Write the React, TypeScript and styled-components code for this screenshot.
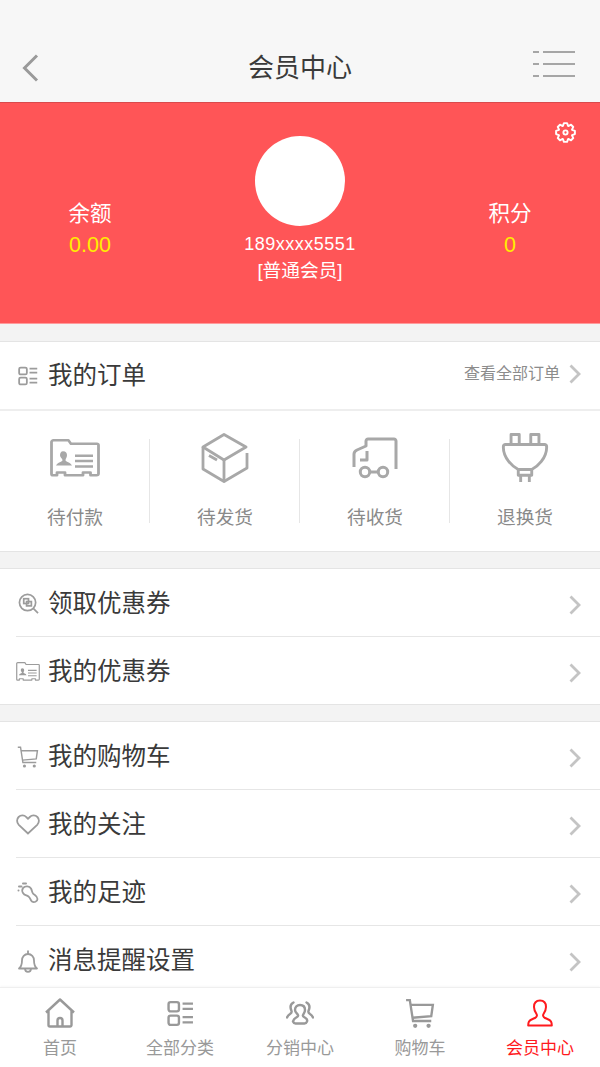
import React from "react";
import styled, { createGlobalStyle } from "styled-components";

const Global = createGlobalStyle`
  html, body { margin: 0; padding: 0; height: 100%; }
  body { font-family: "Liberation Sans", "Noto Sans CJK SC", sans-serif; background: #f3f3f3; }
  #root { height: 100%; }
`;

const Page = styled.div`
  width: 600px; height: 1067px; display: flex; flex-direction: column; overflow: hidden; background: #f3f3f3;
`;
const Scroll = styled.main`
  flex: 1; min-height: 0; overflow: hidden;
`;
const Header = styled.header`
  height: 102px; box-sizing: border-box; padding: 0 25px 0 22px; background: #f7f7f7;
  display: grid; grid-template-columns: 253px auto 1fr; align-items: start;
`;
const BackIcon = styled.svg`
  margin-top: 54px; justify-self: start; grid-column: 1;
`;
const MenuIcon = styled.svg`
  margin-top: 50px; justify-self: end;
`;
const HeaderTitle = styled.h1`
  margin: 50px 0 0 -27px; font-size: 26px; line-height: 36px; font-weight: 400; color: #3a3a3a;
`;
const Hero = styled.section`
  height: 222px; box-sizing: border-box; background: #ff5557; border-top: 1px solid #d94a4c;
  border-bottom: 1px solid #ff9a9b; position: relative;
  display: grid; grid-template-columns: 180px 240px 180px; padding-top: 33px;
`;
const Stat = styled.div`
  display: flex; flex-direction: column; align-items: center; padding-top: 63px;
`;
const StatLabel = styled.div`
  font-size: 21.500px; line-height: 30px; color: #fff;
`;
const StatValue = styled.div`
  font-size: 21.500px; line-height: 32px; color: #ffee00;
`;
const Profile = styled.div`
  display: flex; flex-direction: column; align-items: center;
`;
const Avatar = styled.div`
  width: 90px; height: 90px; border-radius: 50%; background: #fff; margin-bottom: 3px;
`;
const Phone = styled.div`
  font-size: 18px; line-height: 30px; color: #fff; letter-spacing: 0.5px;
`;
const Level = styled.div`
  font-size: 18.700px; line-height: 24px; color: #fff;
`;
const Gear = styled.div`
  position: absolute; top: 19px; right: 24px; width: 21px; height: 21px; color: #fff;
`;
const Panel = styled.section<{ $gap: number }>`
  margin-top: ${(p) => p.$gap}px; background: #fff; border-top: 1px solid #e4e4e4; border-bottom: 1px solid #e4e4e4;
`;
const OrderHead = styled.div`
  height: 67px; display: flex; align-items: center; padding: 0 19px 0 16px; border-bottom: 2px solid #eeeeee;
`;
const RowIcon = styled.span`
  width: 24px; height: 24px; margin-right: 8px; display: flex; align-items: center; justify-content: center;
  color: #9c9c9c; flex: none;
`;
const RowTitle = styled.span`
  font-size: 24.500px; line-height: 34px; color: #3a3a3a; flex: 1;
`;
const AllOrders = styled.span`
  font-size: 16px; line-height: 24px; color: #8c8c8c; margin-right: 9px; margin-top: -3px;
`;
const Chevron = styled.svg<{ $lift: number }>`
  width: 12px; height: 20px; flex: none; color: #c4c4c4; margin-top: ${(p) => p.$lift}px;
`;
const Statuses = styled.div`
  display: grid; grid-template-columns: repeat(4, 150px); height: 140px; box-sizing: border-box;
`;
const StatusCell = styled.div`
  display: flex; flex-direction: column; align-items: center; padding-top: 18px; box-sizing: border-box; position: relative;
  color: #a8a8a8;
  &:not(:last-child)::after {
    content: ""; position: absolute; right: 0; top: 28px; height: 84px; width: 1px; background: #e6e6e6;
  }
`;
const StatusIcon = styled.div`
  height: 58px; display: flex; align-items: center; justify-content: center;
`;
const StatusText = styled.div`
  margin-top: 18px; font-size: 18.700px; line-height: 26px; color: #8a8a8a;
`;
const ListRow = styled.div`
  height: 65px; padding-top: 2px; margin-left: 16px; padding-right: 19px; display: flex; align-items: center;
  & + & { border-top: 1px solid #e6e6e6; }
`;
const TabBar = styled.nav`
  height: 80px; flex: none; background: #fff; border-top: 1px solid #efefef; box-sizing: border-box;
  display: grid; grid-template-columns: repeat(5, 120px); box-shadow: 0 -1px 2px rgba(0,0,0,0.03);
`;
const Tab = styled.div<{ $active?: boolean }>`
  display: flex; flex-direction: column; align-items: center; padding-top: 9px;
  color: ${(p) => (p.$active ? "#ff1a1e" : "#999")};
`;
const TabIcon = styled.div`
  height: 32px; display: flex; align-items: center; justify-content: center;
`;
const TabText = styled.div`
  margin-top: 8px; font-size: 17px; line-height: 24px;
`;

const Right = ({ lift = 2 }: { lift?: number }) => (
  <Chevron $lift={lift} viewBox="0 0 12 20" fill="none" stroke="currentColor" strokeWidth="2.800"><path d="M1.500 1.500 10 10l-8.500 8.500" /></Chevron>
);

const ListIcon = ({ size = 22, sw = 1.500 }: { size?: number; sw?: number }) => (
  <svg width={size} height={size} viewBox="0 0 26 26" fill="none" stroke="currentColor" strokeWidth={(sw * 26) / size}>
    <rect x="1.500" y="2" width="10" height="9" rx="2" /><rect x="1.500" y="15" width="10" height="9" rx="2" />
    <path d="M15 3.500h10M15 8.500h10M15 16.500h10M15 21.500h10" />
  </svg>
);
const CardIcon = ({ w, h, sw }: { w: number; h: number; sw: number }) => (
  <svg width={w} height={h} viewBox="0 0 50 43" fill="none" stroke="currentColor" strokeWidth={sw} preserveAspectRatio="none">
    <path d="M1.500 3.500a2 2 0 0 1 2-2h15l2.500 4h26a1.500 1.500 0 0 1 1.500 1.500V39a2 2 0 0 1-2 2h-6v-3H33v3H15v-3H7v3H3a1.500 1.500 0 0 1-1.500-1.500z" strokeLinejoin="round" />
    <path d="M25 19h18M25 25h18M25 31h18" />
    <path d="M13 14c3 0 4 2 4 4.500 0 2.500-1.500 4-1.500 5.500 0 2 5 2 6.500 6H6c1.500-4 6.500-4 6.500-6C12.500 22.500 10 21 10 18.500 10 16 11 14 13 14z" fill="currentColor" stroke="none" />
  </svg>
);
const BoxIcon = () => (
  <svg width="48" height="50" viewBox="0 0 48 50" fill="none" stroke="currentColor" strokeWidth="2.800" strokeLinejoin="round">
    <path d="M23 1.500 45 14 23 27 2 14z" /><path d="M2 14v22l21 12.500V27" /><path d="M23 48.500 46 35V20" /><path d="M8 22.500l8 4.500" />
  </svg>
);
const TruckIcon = () => (
  <svg width="46" height="42" viewBox="0 0 46 42" fill="none" stroke="currentColor" strokeWidth="3" strokeLinejoin="round">
    <path d="M2 30V17c0-2 1-3 3-4l9-4V4c0-1 1-2 2-2h26c1 0 2 1 2 2v28" />
    <path d="M15 14v9H8" /><circle cx="13" cy="35" r="4.700" /><circle cx="31" cy="35" r="4.700" /><path d="M17.500 35h9" />
  </svg>
);
const PlugIcon = () => (
  <svg width="48" height="50" viewBox="0 0 48 52" fill="none" stroke="currentColor" strokeWidth="3" strokeLinejoin="round">
    <path d="M9.500 12V1.500H18V12M30 12V1.500h8.500V12" />
    <path d="M1.500 14c0-1 1-2 2-2h41c1 0 2 1 2 2v1C46.500 26 37 35 31 38H17C11 35 1.500 26 1.500 15z" />
    <path d="M17 38v6h14v-6M19.500 44v7M28.500 44v7" />
  </svg>
);
const SearchTagIcon = () => (
  <svg width="21" height="21" viewBox="0 0 22 22" fill="none" stroke="currentColor" strokeWidth="1.800">
    <circle cx="10" cy="10" r="8.500" /><path d="M16 16l5 5" /><rect x="6" y="6" width="5" height="5" /><rect x="9" y="9" width="5" height="4.500" />
  </svg>
);
const CartIcon = ({ w, h, sw }: { w: number; h: number; sw: number }) => (
  <svg width={w} height={h} viewBox="0 0 28 28" fill="none" stroke="currentColor" strokeWidth={sw}>
    <path d="M1 1.500h3.500L7.500 21h17" /><path d="M5 6h21l-1.500 10.500L7 18" />
    <circle cx="9.500" cy="25.500" r="2" fill="currentColor" stroke="none" /><circle cx="22" cy="25.500" r="2" fill="currentColor" stroke="none" />
  </svg>
);
const HeartIcon = () => (
  <svg width="24" height="21" viewBox="0 0 24 21" fill="none" stroke="currentColor" strokeWidth="1.800">
    <path d="M12 19.500 2.800 10.800C.5 8.500.6 5 2.600 3c2.200-2.200 5.700-2 7.600 0L12 4.800 13.800 3c2-2 5.400-2.200 7.600 0 2 2 2.100 5.500-.2 7.800z" />
  </svg>
);
const FootIcon = () => (
  <svg width="22" height="22" viewBox="0 0 22 22" fill="none" stroke="currentColor" strokeWidth="1.800" strokeLinecap="round">
    <path d="M6 6c2.500-2.500 6.500-2 8 .5 1 1.800.8 3.500 2 5 1.200 1.500 4.500 2.500 4.500 5.500 0 2.500-3.500 4-5.500 2.500-2-1.600-1.500-3.500-3.500-5-2-1.400-4-1-5.500-3.500C5 9.500 5.300 7.200 6 6z" />
    <path d="M1.500 8.500v.01M2 4.500h2.500M6 1.500h3" strokeWidth="2" />
  </svg>
);
const BellIcon = () => (
  <svg width="22" height="24" viewBox="0 0 22 24" fill="none" stroke="currentColor" strokeWidth="1.800" strokeLinejoin="round">
    <path d="M2 19.500c2.500-2 3-4 3-8 0-3.500 2.500-6.500 6-6.500s6 3 6 6.500c0 4 .5 6 3 8z" /><path d="M11 5V1.500M8 19.500c0 4.500 6 4.500 6 0" />
  </svg>
);
const HomeIcon = () => (
  <svg width="30" height="30" viewBox="0 0 30 30" fill="none" stroke="currentColor" strokeWidth="2.400" strokeLinejoin="round">
    <path d="M1 14.500 15 1.500l14 13M3.500 12.500V27a1.500 1.500 0 0 0 1.500 1.500h20a1.500 1.500 0 0 0 1.500-1.500V12.500" /><path d="M12.500 28.500v-6a2.500 2.500 0 0 1 5 0v6" />
  </svg>
);
const PeopleIcon = () => (
  <svg width="28" height="24" viewBox="0 0 28 24" fill="none" stroke="currentColor" strokeWidth="2.400" strokeLinecap="round">
    <path d="M14 4c3 0 5 2 5 5 0 2.500-1.500 3.800-2 5-.5 1 .5 2 2.500 3 1.500.8 2 2 1.500 3.500-.4 1-1.300 2-2.500 2h-9c-1.200 0-2.100-1-2.500-2C7.500 19 8 17.800 9.500 17c2-1 3-2 2.500-3-.5-1.200-3-2.500-3-5 0-3 2-5 5-5z" />
    <path d="M7.500 1.500C4.500 3 4 6.500 5.500 10c.5 1.200 0 2-1.500 3-1.300.8-2.300 1.800-3 3.500M20.500 1.500c3 1.500 3.500 5 2 8.500-.5 1.200 0 2 1.500 3 1.300.8 2.300 1.800 3 3.500" />
  </svg>
);
const UserIcon = () => (
  <svg width="26" height="28" viewBox="0 0 26 28" fill="none" stroke="currentColor" strokeWidth="2" strokeLinejoin="round">
    <path d="M13 1.500c4 0 6 2.500 6 6.500 0 3-1.500 5.500-2.500 7-.8 1.200-.5 3 1.500 4 2 1 5 1.500 6 3.500.5 1 .8 2.500.8 4H1.200c0-1.500.3-3 .8-4 1-2 4-2.500 6-3.500 2-1 2.300-2.800 1.500-4C8.500 13.500 7 11 7 8c0-4 2-6.500 6-6.500z" />
  </svg>
);

const gearPath = (() => {
  const teeth = 8;
  const cx = 11;
  const cy = 11;
  const pts: string[] = [];
  for (let i = 0; i < teeth; i++) {
    const a = (i * 2 * Math.PI) / teeth - Math.PI / 2;
    const d = Math.PI / teeth;
    [[7.4, -d * 0.95], [10, -d * 0.42], [10, d * 0.42], [7.4, d * 0.95]].forEach(([r, o]) => {
      pts.push(`${(cx + r * Math.cos(a + o)).toFixed(2)} ${(cy + r * Math.sin(a + o)).toFixed(2)}`);
    });
  }
  return `M${pts.join("L")}Z`;
})();

const rows1 = [
  { t: "领取优惠券", i: <SearchTagIcon /> },
  { t: "我的优惠券", i: <CardIcon w={24} h={19} sw={2.500} /> },
];
const rows2 = [
  { t: "我的购物车", i: <CartIcon w={22} h={22} sw={1.800} /> },
  { t: "我的关注", i: <HeartIcon /> },
  { t: "我的足迹", i: <FootIcon /> },
  { t: "消息提醒设置", i: <BellIcon /> },
];
const statuses = [
  { t: "待付款", i: <CardIcon w={50} h={38} sw={2.800} /> },
  { t: "待发货", i: <BoxIcon /> },
  { t: "待收货", i: <TruckIcon /> },
  { t: "退换货", i: <PlugIcon /> },
];
const tabs = [
  { t: "首页", i: <HomeIcon /> },
  { t: "全部分类", i: <ListIcon size={27} sw={2.400} /> },
  { t: "分销中心", i: <PeopleIcon /> },
  { t: "购物车", i: <CartIcon w={30} h={31} sw={2.200} /> },
  { t: "会员中心", i: <UserIcon />, active: true },
];

export default function App() {
  return (
    <Page>
      <Global />
      <Scroll>
        <Header>
          <BackIcon width="17" height="28" viewBox="0 0 17 28" fill="none" stroke="#9a9a9a" strokeWidth="3">
            <path d="M15 1.500 2.500 14 15 26.500" />
          </BackIcon>
          <HeaderTitle>会员中心</HeaderTitle>
          <MenuIcon width="42" height="28" viewBox="0 0 42 28" fill="none" stroke="#a6a6a6" strokeWidth="2">
            <path d="M0 2h6M10 2h32M0 14h6M10 14h32M0 26h6M10 26h32" />
          </MenuIcon>
        </Header>
        <Hero>
          <Stat><StatLabel>余额</StatLabel><StatValue>0.00</StatValue></Stat>
          <Profile>
            <Avatar />
            <Phone>189xxxx5551</Phone>
            <Level>[普通会员]</Level>
          </Profile>
          <Stat><StatLabel>积分</StatLabel><StatValue>0</StatValue></Stat>
          <Gear>
            <svg width="21" height="21" viewBox="0 0 22 22" fill="none" stroke="currentColor" strokeWidth="2" strokeLinejoin="round">
              <path d={gearPath} />
              <circle cx="11" cy="11" r="2.200" />
            </svg>
          </Gear>
        </Hero>
        <Panel $gap={17}>
          <OrderHead>
            <RowIcon><ListIcon size={20} sw={1.800} /></RowIcon>
            <RowTitle>我的订单</RowTitle>
            <AllOrders>查看全部订单</AllOrders>
            <Right lift={-3} />
          </OrderHead>
          <Statuses>
            {statuses.map((s) => (
              <StatusCell key={s.t}>
                <StatusIcon>{s.i}</StatusIcon>
                <StatusText>{s.t}</StatusText>
              </StatusCell>
            ))}
          </Statuses>
        </Panel>
        <Panel $gap={16}>
          {rows1.map((r) => (
            <ListRow key={r.t}><RowIcon>{r.i}</RowIcon><RowTitle>{r.t}</RowTitle><Right /></ListRow>
          ))}
        </Panel>
        <Panel $gap={16}>
          {rows2.map((r) => (
            <ListRow key={r.t}><RowIcon>{r.i}</RowIcon><RowTitle>{r.t}</RowTitle><Right /></ListRow>
          ))}
        </Panel>
      </Scroll>
      <TabBar>
        {tabs.map((t) => (
          <Tab key={t.t} $active={t.active}>
            <TabIcon>{t.i}</TabIcon>
            <TabText>{t.t}</TabText>
          </Tab>
        ))}
      </TabBar>
    </Page>
  );
}
